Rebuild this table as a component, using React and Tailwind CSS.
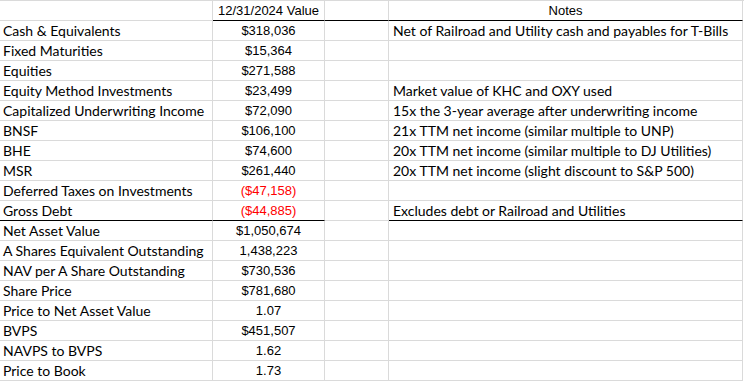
const rows = [
  ['Cash & Equivalents', '$318,036', 'Net of Railroad and Utility cash and payables for T-Bills'],
  ['Fixed Maturities', '$15,364', ''],
  ['Equities', '$271,588', ''],
  ['Equity Method Investments', '$23,499', 'Market value of KHC and OXY used'],
  ['Capitalized Underwriting Income', '$72,090', '15x the 3-year average after underwriting income'],
  ['BNSF', '$106,100', '21x TTM net income (similar multiple to UNP)'],
  ['BHE', '$74,600', '20x TTM net income (similar multiple to DJ Utilities)'],
  ['MSR', '$261,440', '20x TTM net income (slight discount to S&P 500)'],
  ['Deferred Taxes on Investments', '($47,158)', '', true],
  ['Gross Debt', '($44,885)', 'Excludes debt or Railroad and Utilities', true],
  ['Net Asset Value', '$1,050,674', ''],
  ['A Shares Equivalent Outstanding', '1,438,223', ''],
  ['NAV per A Share Outstanding', '$730,536', ''],
  ['Share Price', '$781,680', ''],
  ['Price to Net Asset Value', '1.07', ''],
  ['BVPS', '$451,507', ''],
  ['NAVPS to BVPS', '1.62', ''],
  ['Price to Book', '1.73', ''],
];

const sans = "font-['Lato','Noto_Sans',sans-serif]";
const arial = "font-['Liberation_Sans',Arial,sans-serif]";

export default function App() {
  return (
    <div className="w-[744px] h-[381px] bg-white overflow-hidden text-black">
      <div className="grid grid-cols-[213px_112px_64px_354px] border-t border-[#dadada]">
        <div className="h-5 border-r border-b border-[#dadada]" />
        <div className={`h-5 border-r border-[#dadada] border-b border-b-black flex items-center justify-center text-[13px] ${arial}`}>
          12/31/2024 Value
        </div>
        <div className="h-5 border-r border-[#dadada] border-b border-b-black" />
        <div className={`h-5 border-r border-[#dadada] border-b border-b-black flex items-center justify-center text-[13px] ${arial}`}>
          Notes
        </div>

        {rows.map(([label, value, note, red], i) => {
          const thick = label === 'Gross Debt';
          const bottom = thick ? 'border-b-black' : 'border-b-[#dadada]';
          return [
            <div key={i + 'a'} className={`h-5 border-r border-[#dadada] border-b ${bottom} flex items-center pl-[3px] text-[14px] whitespace-nowrap ${sans}`}>
              {label}
            </div>,
            <div key={i + 'b'} className={`h-5 border-r border-[#dadada] border-b ${bottom} flex items-center justify-center text-[13px] ${arial} ${red ? 'text-[#ff0000]' : ''}`}>
              {value}
            </div>,
            <div key={i + 'c'} className="h-5 border-r border-b border-[#dadada]" />,
            <div key={i + 'd'} className={`h-5 border-r border-[#dadada] border-b ${bottom} flex items-center pl-[4px] text-[14px] whitespace-nowrap ${sans}`}>
              {note}
            </div>,
          ];
        })}
      </div>
    </div>
  );
}
